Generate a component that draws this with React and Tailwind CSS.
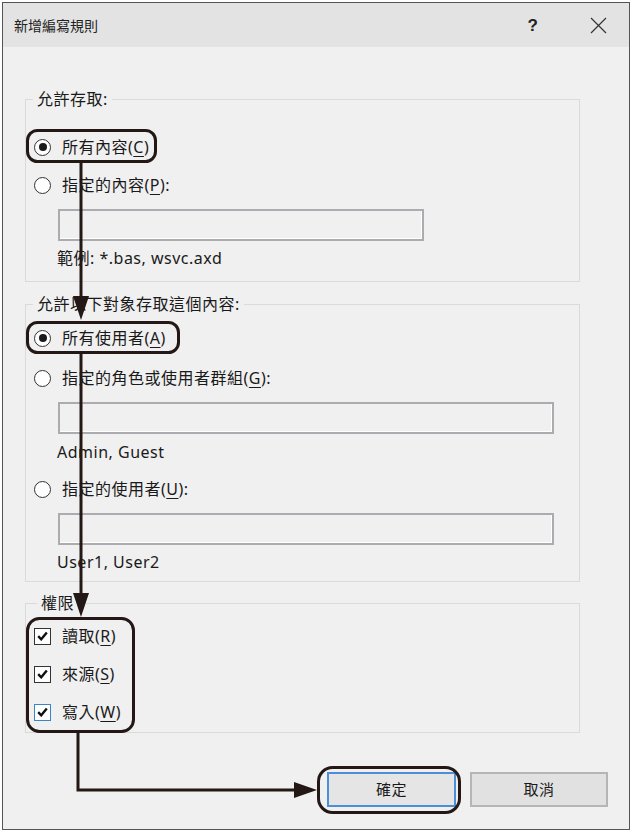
import React from "react";

const Acc = ({ c }) => <span className="underline underline-offset-[3px] decoration-1">{c}</span>;

function Radio({ checked }) {
  return (
    <span className="w-[17px] h-[17px] rounded-full border border-[#333333] bg-white flex items-center justify-center shrink-0">
      {checked && <span className="w-[8px] h-[8px] rounded-full bg-[#1a1a1a]" />}
    </span>
  );
}

function Check({ blue }) {
  return (
    <span
      className={
        blue
          ? "w-[17px] h-[17px] border border-[#3c84c8] bg-white flex items-center justify-center shrink-0"
          : "w-[17px] h-[17px] border border-[#333333] bg-white flex items-center justify-center shrink-0"
      }
    >
      <svg width="11" height="10" viewBox="0 0 11 10">
        <path d="M1.2 5.2 L4.2 8.3 L9.8 1.4" stroke="#111" strokeWidth="2.4" fill="none" strokeLinejoin="miter" />
      </svg>
    </span>
  );
}

function Row({ children, className }) {
  return <div className={"flex items-center h-[24px] pl-[8px] gap-[11px] " + (className || "")}>{children}</div>;
}

function Field({ w, className }) {
  return (
    <div
      className={
        "ml-[32px] h-[32px] bg-[#f0f0f0] border-2 border-[#acacb0] shadow-[inset_-1px_-1px_0_#ffffff] " +
        (className || "")
      }
      style={{ width: w }}
    />
  );
}

export default function App() {
  return (
    <div className="relative w-[633px] h-[833px] bg-white pt-[2px] pl-[2px] font-['Noto_Sans','Noto_Sans_CJK_TC',sans-serif] text-[#1a1a1a]">
      <div className="w-[628px] h-[828px] border border-[#555555] flex flex-col bg-[#f0f0f0]">
        {/* title bar */}
        <div className="h-[44px] bg-[#e3e3e3] flex items-center pl-[11px] shrink-0">
          <span className="text-[14px] text-[#222] font-['Noto_Sans_CJK_TC',sans-serif]">新增編寫規則</span>
          <div className="flex-1" />
          <span className="text-[17px] font-bold text-[#222] mr-[52px] font-['Liberation_Sans',sans-serif] leading-none">?</span>
          <svg width="17" height="17" viewBox="0 0 17 17" className="mr-[22px]">
            <path d="M1 1 L16 16 M16 1 L1 16" stroke="#333" strokeWidth="1.2" />
          </svg>
        </div>

        {/* body */}
        <div className="flex flex-col pl-[22px] pr-[21px] pt-[42px] text-[16px] tracking-[0.5px]">
          {/* group 1 */}
          <fieldset className="w-[555px] border border-[#dadada] pb-[13px]">
            <legend className="ml-[7px] px-[4px] leading-[20px]">允許存取:</legend>
            <Row className="mt-[26px]">
              <Radio checked />
              <span className="leading-[24px]">所有內容(<Acc c="C" />)</span>
            </Row>
            <Row className="mt-[14px]">
              <Radio />
              <span className="leading-[24px]">指定的內容(<Acc c="P" />):</span>
            </Row>
            <Field w={366} className="mt-[12px]" />
            <div className="ml-[31px] mt-[7px] leading-[20px]">範例: *.bas, wsvc.axd</div>
          </fieldset>

          {/* group 2 */}
          <fieldset className="w-[555px] border border-[#dadada] pb-[9px] mt-[12px]">
            <legend className="ml-[7px] px-[4px] leading-[20px]">允許以下對象存取這個內容:</legend>
            <Row className="mt-[12px]">
              <Radio checked />
              <span className="leading-[24px]">所有使用者(<Acc c="A" />)</span>
            </Row>
            <Row className="mt-[16px]">
              <Radio />
              <span className="leading-[24px]">指定的角色或使用者群組(<Acc c="G" />):</span>
            </Row>
            <Field w={496} className="mt-[12px]" />
            <div className="ml-[31px] mt-[8px] leading-[20px]">Admin, Guest</div>
            <Row className="mt-[15px]">
              <Radio />
              <span className="leading-[24px]">指定的使用者(<Acc c="U" />):</span>
            </Row>
            <Field w={496} className="mt-[12px]" />
            <div className="ml-[31px] mt-[7px] leading-[20px]">User1, User2</div>
          </fieldset>

          {/* group 3 */}
          <fieldset className="w-[555px] border border-[#dadada] pb-[8px] mt-[11px]">
            <legend className="ml-[11px] px-[4px] leading-[20px]">權限</legend>
            <Row className="mt-[11px]">
              <Check />
              <span className="leading-[24px]">讀取(<Acc c="R" />)</span>
            </Row>
            <Row className="mt-[14px]">
              <Check />
              <span className="leading-[24px]">來源(<Acc c="S" />)</span>
            </Row>
            <Row className="mt-[14px]">
              <Check blue />
              <span className="leading-[24px]">寫入(<Acc c="W" />)</span>
            </Row>
          </fieldset>

          {/* buttons */}
          <div className="flex justify-end gap-[14px] mt-[39px]">
            <button className="w-[129px] h-[35px] bg-[#e5e5e5] border-2 border-[#4a8fd8] text-[15px]">確定</button>
            <button className="w-[138px] h-[35px] bg-[#e1e1e1] border-2 border-[#b5b5b5] text-[15px]">取消</button>
          </div>
        </div>
      </div>

      {/* annotation overlay */}
      <svg className="absolute inset-0 pointer-events-none" width="633" height="833" viewBox="0 0 633 833">
        <g fill="none" stroke="#231815" strokeWidth="3">
          <rect x="27.5" y="130.5" width="128" height="31" rx="10" />
          <rect x="27.5" y="322.5" width="151" height="30" rx="10" />
          <rect x="27.5" y="618.5" width="106" height="113" rx="12" />
          <rect x="318.5" y="767.5" width="141" height="45" rx="14" />
          <path d="M81 162 L81 300" />
          <path d="M81 354 L81 596" />
          <path d="M78 732 L78 790 L298 790" />
        </g>
        <g fill="#231815">
          <path d="M73 296 L89 296 L81 320 Z" />
          <path d="M73 593 L89 593 L81 617 Z" />
          <path d="M294 782 L294 798 L317 790 Z" />
        </g>
      </svg>
    </div>
  );
}
